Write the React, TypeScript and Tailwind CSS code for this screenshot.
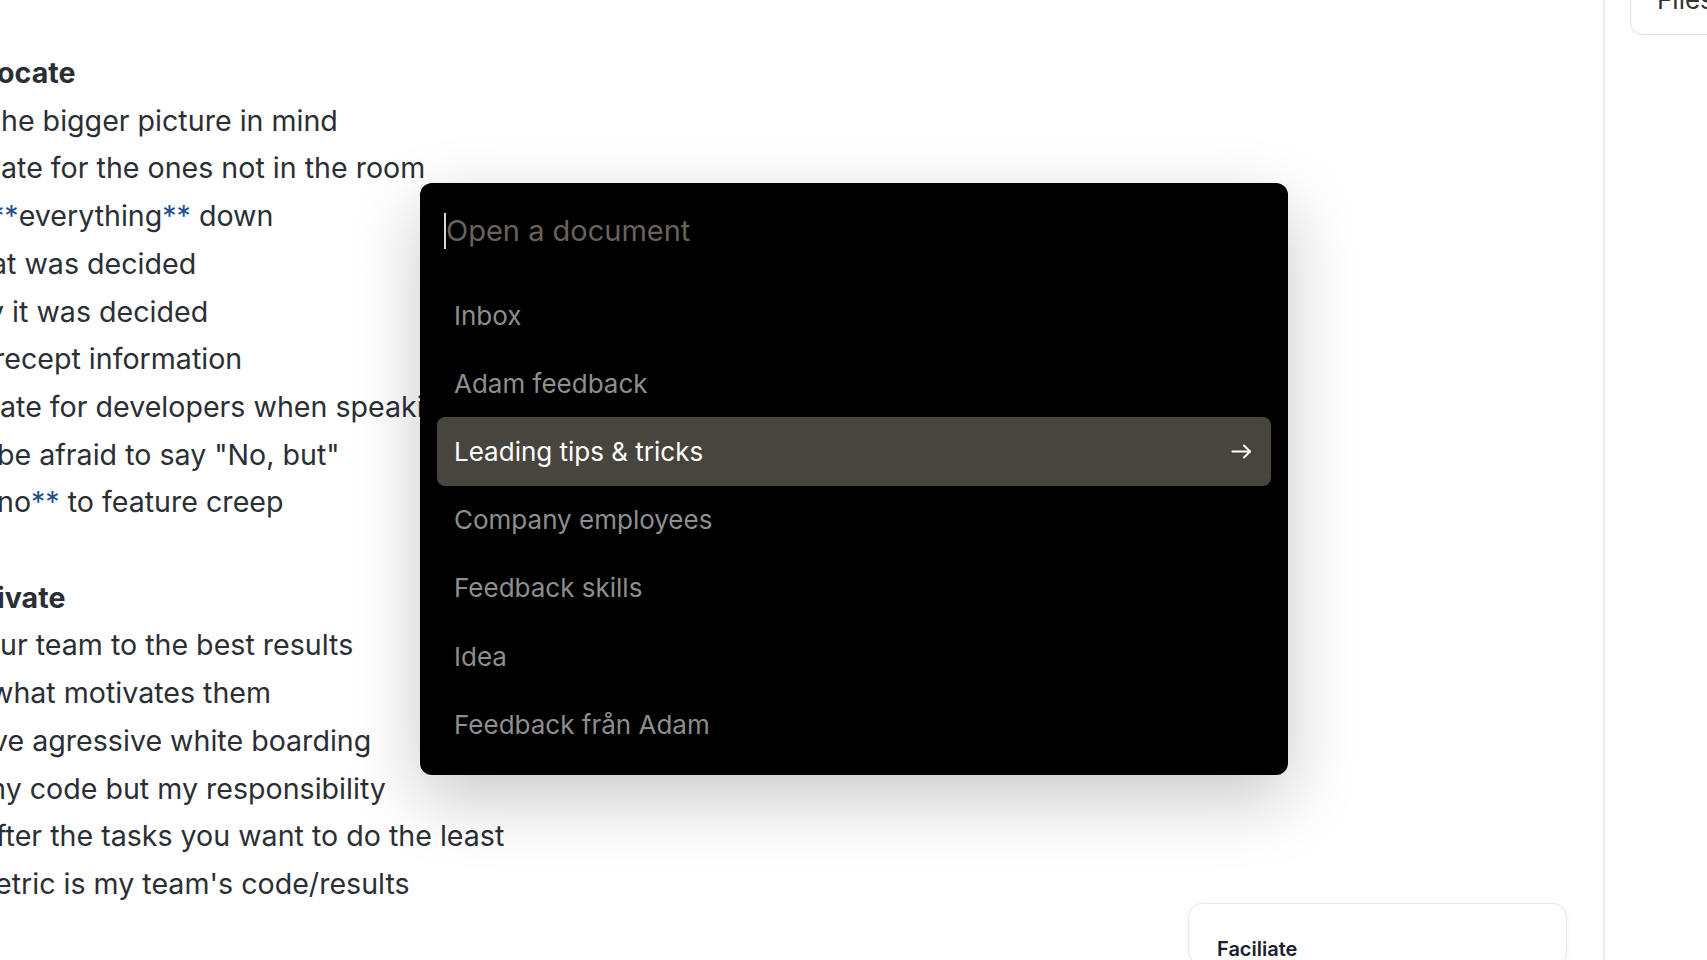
type Piece = { t: string; blue?: boolean }
type Line = { off: number; bold?: boolean; parts: Piece[] }

const lines: Line[] = [
  { off: -3, bold: true, parts: [{ t: 'ocate' }] },
  { off: 1, parts: [{ t: 'he bigger picture in mind' }] },
  { off: 1, parts: [{ t: 'ate for the ones not in the room' }] },
  { off: -10, parts: [{ t: '**', blue: true }, { t: 'everything' }, { t: '**', blue: true }, { t: ' down' }] },
  { off: -9, parts: [{ t: 'at was decided' }] },
  { off: -12, parts: [{ t: 'y it was decided' }] },
  { off: -6, parts: [{ t: 'recept information' }] },
  { off: 0, parts: [{ t: 'ate for developers when speaking to management' }] },
  { off: -3, parts: [{ t: 'be afraid to say "No, but"' }] },
  { off: -3, parts: [{ t: 'no' }, { t: '**', blue: true }, { t: ' to feature creep' }] },
  { off: 0, parts: [{ t: '\u00a0' }] },
  { off: -3, bold: true, parts: [{ t: 'ivate' }] },
  { off: 0, parts: [{ t: 'ur team to the best results' }] },
  { off: -10, parts: [{ t: 'what motivates them' }] },
  { off: -8, parts: [{ t: 've agressive white boarding' }] },
  { off: -19, parts: [{ t: 'my code but my responsibility' }] },
  { off: -4, parts: [{ t: 'fter the tasks you want to do the least' }] },
  { off: -5, parts: [{ t: "etric is my team's code/results" }] },
]

const docs = [
  'Inbox',
  'Adam feedback',
  'Leading tips & tricks',
  'Company employees',
  'Feedback skills',
  'Idea',
  'Feedback från Adam',
]

function Arrow() {
  return (
    <svg width="21" height="15" viewBox="0 0 21 15" fill="none" stroke="currentColor" strokeWidth="2" strokeLinecap="round" strokeLinejoin="round" className="mr-[2px] text-white">
      <path d="M1.5 7.5h17.5" />
      <path d="M13 1.5l6 6-6 6" />
    </svg>
  )
}

function DocPicker() {
  return (
    <div className="absolute left-[420px] top-[183px] w-[868px] rounded-[12px] bg-black px-[17px] pb-[17px] shadow-[0_24px_70px_rgba(0,0,0,0.22)]">
      <div className="flex h-[98px] items-start pl-[7px] pt-[31px]">
        <span className="mt-[-1px] h-[36px] w-[2px] bg-[#d8d8d8]" />
        <span className="text-[29px] leading-[34px] text-[#67625d]">Open a document</span>
      </div>
      <ul className="flex flex-col">
        {docs.map((d) => {
          const on = d === 'Leading tips & tricks'
          return (
            <li
              key={d}
              className={
                on
                  ? 'flex h-[68.2px] items-center justify-between rounded-[8px] bg-[#48453f] px-[17px] text-[26px] text-white'
                  : 'flex h-[68.2px] items-center px-[17px] text-[26px] text-[#8e8e8e]'
              }
            >
              <span>{d}</span>
              {on && <Arrow />}
            </li>
          )
        })}
      </ul>
    </div>
  )
}

export default function App() {
  return (
    <div className="flex h-screen w-full overflow-hidden bg-white font-['Inter','Noto_Sans',sans-serif]">
      <main className="relative flex flex-1 overflow-hidden">
        <div className="w-[1188px] shrink-0 pt-[49px] text-[28.6px] leading-[47.7px] text-[#2b2f35]">
          {lines.map((l, i) => (
            <div key={i} className={l.bold ? 'whitespace-nowrap font-bold' : 'whitespace-nowrap'} style={{ marginLeft: l.off }}>
              {l.parts.map((p, j) => (
                <span key={j} className={p.blue ? 'text-[#1e4f8c]' : ''}>
                  {p.t}
                </span>
              ))}
            </div>
          ))}
        </div>
        <div className="flex flex-col pt-[903px]">
          <div className="h-[120px] w-[379px] rounded-[14px] border border-[#e6e6e6] bg-white px-[28px] pt-[30px] shadow-[0_2px_10px_rgba(0,0,0,0.03)]">
            <p className="text-[20px] font-semibold text-[#1b2030]">Faciliate</p>
          </div>
        </div>
        <DocPicker />
      </main>
      <aside className="w-[104px] shrink-0 border-l-2 border-[#ececec] pl-[25px]">
        <div className="mt-[-60px] h-[95px] w-[120px] rounded-[12px] border border-[#e2e2e2] bg-white pl-[26px] pt-[44px]">
          <p className="text-[26px] leading-[30px] text-[#333]">Files</p>
        </div>
      </aside>
    </div>
  )
}
